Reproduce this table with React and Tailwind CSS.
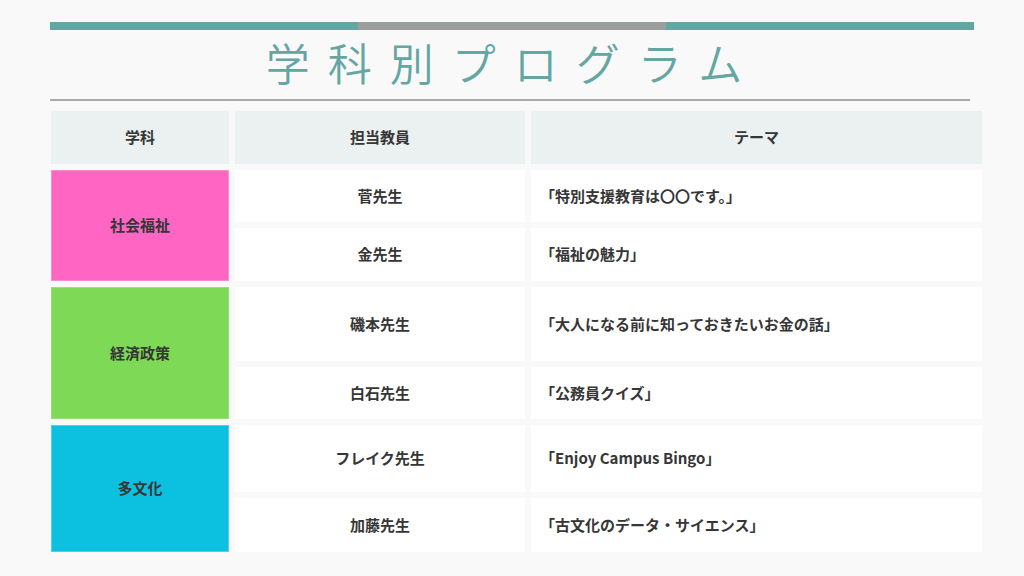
import React from "react";

const font = { fontFamily: '"Noto Sans CJK JP", "Noto Sans", sans-serif' };

function Cell({ children, className = "" }) {
  return (
    <div className={"flex items-center text-[15px] font-bold text-[#363636] " + className}>
      {children}
    </div>
  );
}

export default function App() {
  return (
    <div className="w-[1024px] h-[576px] bg-[#f9f9f9] flex flex-col overflow-hidden" style={font}>
      <div className="mt-[22px] ml-[50px] w-[924px] h-[8px] flex">
        <div className="flex-1 bg-[#64a6a2]" />
        <div className="flex-1 bg-[#9a9e9d]" />
        <div className="flex-1 bg-[#64a6a2]" />
      </div>
      <div className="h-[69px] flex items-center justify-center pb-[6px] pl-[2px]">
        <span className="text-[44px] leading-none font-[350] text-[#64a6a2] tracking-[18px]">
          学科別プログラム
        </span>
      </div>
      <div className="ml-[50px] w-[920px] h-[2px] bg-[#a7a9a8]" />
      <div className="mt-[10px] ml-[51px] grid grid-cols-[178px_290px_451px] grid-rows-[53px_52px_53px_74px_52px_67px_54px] gap-[6px]">
        <Cell className="justify-center bg-[#ebf0f0] text-[14px]">学科</Cell>
        <Cell className="justify-center bg-[#ebf0f0] text-[14px]">担当教員</Cell>
        <Cell className="justify-center bg-[#ebf0f0] text-[14px]">テーマ</Cell>

        <Cell className="row-span-2 justify-center bg-[#ff66c4] border border-[#ff8cd2]">社会福祉</Cell>
        <Cell className="justify-center bg-white">菅先生</Cell>
        <Cell className="bg-white pl-[9px]">「特別支援教育は〇〇です。」</Cell>
        <Cell className="justify-center bg-white">金先生</Cell>
        <Cell className="bg-white pl-[9px]">「福祉の魅力」</Cell>

        <Cell className="row-span-2 justify-center bg-[#7ed957] border border-[#98e07a]">経済政策</Cell>
        <Cell className="justify-center bg-white">磯本先生</Cell>
        <Cell className="bg-white pl-[9px]">「大人になる前に知っておきたいお金の話」</Cell>
        <Cell className="justify-center bg-white">白石先生</Cell>
        <Cell className="bg-white pl-[9px]">「公務員クイズ」</Cell>

        <Cell className="row-span-2 justify-center bg-[#0cc0df] border border-[#4fd0e6]">多文化</Cell>
        <Cell className="justify-center bg-white">フレイク先生</Cell>
        <Cell className="bg-white pl-[9px]">「Enjoy Campus Bingo」</Cell>
        <Cell className="justify-center bg-white">加藤先生</Cell>
        <Cell className="bg-white pl-[9px] text-[#111]">「古文化のデータ・サイエンス」</Cell>
      </div>
    </div>
  );
}
